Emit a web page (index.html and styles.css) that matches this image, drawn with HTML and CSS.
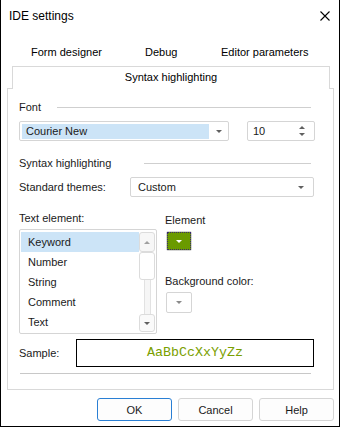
FILE: index.html
```html
<!DOCTYPE html>
<html>
<head>
<meta charset="utf-8">
<link rel="stylesheet" href="styles.css">
</head>
<body>
<div class="window">
  <div class="titlebar">
    <span class="title">IDE settings</span>
    <svg class="close" width="10" height="10" viewBox="0 0 10 10"><path d="M0.5 0.5L9.5 9.5M9.5 0.5L0.5 9.5" stroke="#000" stroke-width="1.1" fill="none"/></svg>
  </div>
  <div class="tabs">
    <span class="tab">Form designer</span>
    <span class="tab">Debug</span>
    <span class="tab">Editor parameters</span>
  </div>
  <div class="tab-active">Syntax highlighting</div>
  <div class="panel">
    <div class="group-head">
      <span class="gh-label gh-font">Font</span>
      <span class="gh-line"></span>
    </div>
    <div class="font-row">
      <div class="combo font-combo">
        <span class="sel">Courier New</span>
        <span class="arrow-box"><span class="tri-down"></span></span>
      </div>
      <div class="combo spin">
        <span class="spin-val">10</span>
        <span class="spin-arrows"><span class="tri-up"></span><span class="tri-down"></span></span>
      </div>
    </div>
    <div class="group-head gh-syntax">
      <span class="gh-label gh-syn">Syntax highlighting</span>
      <span class="gh-line"></span>
    </div>
    <div class="themes-row">
      <span class="themes-label">Standard themes:</span>
      <div class="combo themes-combo">
        <span class="combo-val">Custom</span>
        <span class="arrow-box"><span class="tri-down"></span></span>
      </div>
    </div>
    <div class="elements">
      <div class="col-left">
        <div class="lbl">Text element:</div>
        <div class="listbox">
          <div class="items">
            <div class="item selected">Keyword</div>
            <div class="item">Number</div>
            <div class="item">String</div>
            <div class="item">Comment</div>
            <div class="item">Text</div>
          </div>
          <div class="scrollbar">
            <div class="sb-btn sb-up"><span class="tri-up small"></span></div>
            <div class="sb-thumb"></div>
            <div class="sb-track"></div>
            <div class="sb-btn sb-down"><span class="tri-down small dark"></span></div>
          </div>
        </div>
      </div>
      <div class="col-right">
        <div class="lbl">Element</div>
        <div class="color-btn">
          <div class="swatch"><span class="tri-down white"></span></div>
        </div>
        <div class="lbl bg-lbl">Background color:</div>
        <div class="color-btn empty">
          <span class="tri-down"></span>
        </div>
      </div>
    </div>
    <div class="sample-row">
      <span class="sample-label">Sample:</span>
      <div class="sample-box">AaBbCcXxYyZz</div>
    </div>
    <div class="sep"></div>
  </div>
  <div class="buttons">
    <button class="btn default">OK</button>
    <button class="btn">Cancel</button>
    <button class="btn">Help</button>
  </div>
</div>
</body>
</html>
```
FILE: styles.css
```css
* { box-sizing: border-box; }
html, body { margin: 0; padding: 0; background: #fff; }
body {
  font-family: "Liberation Sans", Arial, sans-serif;
  font-size: 11px;
  color: #1a1a1a;
}
.window {
  width: 340px;
  height: 427px;
  border-left: 1px solid #000;
  border-right: 1px solid #000;
  border-bottom: 1px solid #000;
  background: #fff;
  overflow: hidden;
}
.titlebar {
  height: 32px;
  display: flex;
  align-items: center;
  justify-content: space-between;
  padding-left: 8px;
  padding-right: 9px;
}
.title { font-size: 12px; color: #000; line-height: 16px; }
.close { display: block; margin-top: -1px; }
.tabs {
  height: 34px;
  padding-top: 12px;
  padding-left: 30px;
  display: flex;
  line-height: 16px;
  font-size: 11px;
  color: #000;
}
.tab:nth-child(1) { width: 114px; }
.tab:nth-child(2) { width: 76px; }
.tab-active {
  position: relative;
  z-index: 1;
  margin-left: 11px;
  width: 318px;
  height: 23px;
  margin-bottom: -1px;
  border: 1px solid #d9d9d9;
  border-bottom: none;
  background: #fff;
  text-align: center;
  line-height: 16px;
  padding-top: 2px;
  font-size: 11px;
  color: #000;
}
.panel {
  margin-left: 6px;
  width: 327px;
  border: 1px solid #d9d9d9;
  padding: 10px 18px 15px 11px;
}
.group-head {
  display: flex;
  align-items: center;
  height: 16px;
  line-height: 16px;
}
.gh-label { flex: none; }
.gh-font { width: 38px; }
.gh-syn { width: 125px; }
.gh-line {
  flex: 1;
  height: 1px;
  background: #cfcfcf;
  margin-right: 4px;
}
.font-row {
  display: flex;
  gap: 18px;
  margin-top: 6px;
}
.combo {
  height: 20px;
  border: 1px solid #d5d5d5;
  border-radius: 2px;
  display: flex;
  align-items: center;
  background: #fff;
}
.font-combo { width: 210px; }
.sel {
  width: 187px;
  height: 15px;
  margin-left: 2px;
  background: #cce4f7;
  line-height: 15px;
  padding-left: 4px;
  color: #1a1a1a;
}
.arrow-box {
  flex: 1;
  display: flex;
  justify-content: center;
  align-items: center;
}
.tri-down, .tri-up {
  display: block;
  width: 0;
  height: 0;
  border-left: 3px solid transparent;
  border-right: 3px solid transparent;
}
.tri-down { border-top: 3px solid #606060; }
.tri-up { border-bottom: 3px solid #606060; }
.tri-up.small { border-bottom-color: #a0a0a0; }
.tri-down.small { border-top-color: #a0a0a0; }
.tri-down.dark { border-top-color: #606060; }
.tri-down.white { border-top-color: #fff; }
.spin {
  width: 68px;
  justify-content: space-between;
  padding-left: 5px;
  padding-right: 9px;
}
.spin-arrows {
  display: flex;
  flex-direction: column;
  gap: 4px;
}
.gh-syntax { margin-top: 14px; }
.themes-row {
  display: flex;
  align-items: center;
  margin-top: 6px;
}
.themes-label { width: 111px; }
.themes-combo {
  width: 184px;
  padding-left: 7px;
}
.themes-combo .arrow-box {
  justify-content: flex-end;
  padding-right: 9px;
}
.elements {
  display: flex;
  gap: 8px;
  margin-top: 13px;
}
.col-left { width: 138px; }
.lbl { line-height: 16px; height: 16px; }
.listbox {
  margin-top: 3px;
  height: 105px;
  border: 1px solid #d5d5d5;
  border-radius: 2px;
  padding: 2px 1px 1px 1px;
  display: flex;
}
.items { width: 118px; }
.item {
  height: 20px;
  line-height: 20px;
  padding-left: 7px;
}
.item.selected { background: #cce4f7; }
.scrollbar {
  width: 16px;
  height: 100px;
  display: flex;
  flex-direction: column;
  align-items: center;
}
.sb-btn {
  width: 16px;
  display: flex;
  align-items: center;
  justify-content: center;
  border: 1px solid #dcdcdc;
  border-radius: 3px;
  background: #f7f7f7;
}
.sb-up { height: 20px; }
.sb-down { height: 18px; background: #fafafa; }
.sb-thumb {
  width: 16px;
  height: 28px;
  border: 1px solid #dcdcdc;
  border-radius: 3px;
  background: #fff;
}
.sb-track {
  flex: 1;
  width: 7px;
  border-left: 1px solid #e2e2e2;
  border-right: 1px solid #e2e2e2;
  background: #f6f6f6;
}
.col-right { padding-top: 2px; }
.color-btn {
  margin-top: 3px;
  margin-left: 1px;
  width: 26px;
  height: 20px;
  border: 1px solid #d5d5d5;
  border-radius: 2px;
  display: flex;
  align-items: center;
  justify-content: center;
}
.swatch {
  width: 100%;
  height: 100%;
  background: #6a9a00;
  border: 1px dotted #3a2a6a;
  display: flex;
  align-items: center;
  justify-content: center;
}
.bg-lbl { margin-top: 22px; }
.color-btn.empty { height: 21px; }
.color-btn.empty .tri-down { border-top-color: #8a8a8a; }
.sample-row {
  display: flex;
  align-items: center;
  margin-top: 5px;
}
.sample-label { width: 57px; }
.sample-box {
  width: 238px;
  height: 28px;
  border: 1px solid #000;
  display: flex;
  align-items: center;
  justify-content: center;
  font-family: "Liberation Mono", "Courier New", monospace;
  font-size: 13.33px;
  color: #7aa000;
  padding-bottom: 1px;
}
.sep {
  margin-top: 6px;
  margin-left: 1px;
  margin-right: 4px;
  height: 1px;
  background: #c8c8c8;
}
.buttons {
  display: flex;
  justify-content: flex-end;
  gap: 6px;
  padding-right: 5px;
  margin-top: 8px;
}
.btn {
  width: 75px;
  height: 23px;
  border: 1px solid #d5d5d5;
  border-radius: 3px;
  background: #fdfdfd;
  font-family: "Liberation Sans", Arial, sans-serif;
  font-size: 11px;
  color: #1a1a1a;
  padding: 0;
}
.btn.default { border-color: #2a7fd4; }
```
